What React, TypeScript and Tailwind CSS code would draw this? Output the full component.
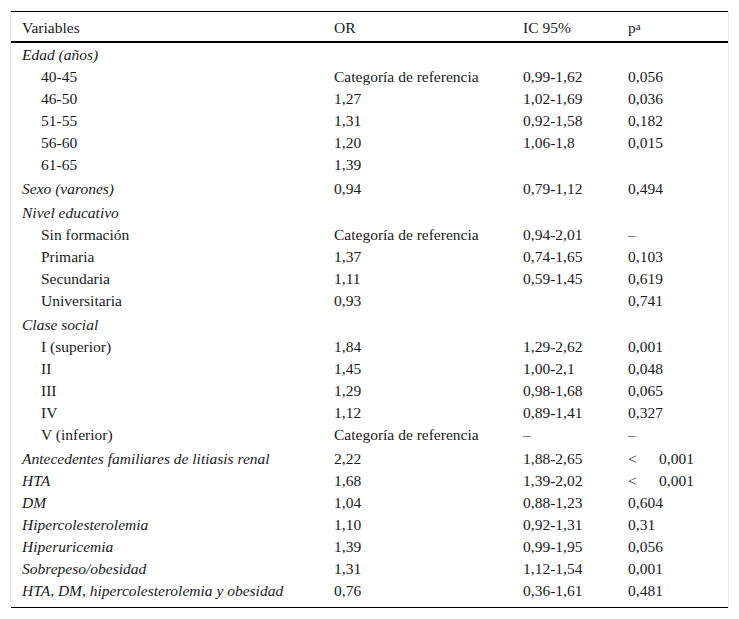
type Row = {
  label: string;
  or?: string;
  ic?: string;
  p?: string;
  lt?: boolean;
  sub?: boolean;
  gap?: boolean;
};

const rows: Row[] = [
  { label: "Edad (años)" },
  { label: "40-45", or: "Categoría de referencia", ic: "0,99-1,62", p: "0,056", sub: true },
  { label: "46-50", or: "1,27", ic: "1,02-1,69", p: "0,036", sub: true },
  { label: "51-55", or: "1,31", ic: "0,92-1,58", p: "0,182", sub: true },
  { label: "56-60", or: "1,20", ic: "1,06-1,8", p: "0,015", sub: true },
  { label: "61-65", or: "1,39", sub: true },
  { label: "Sexo (varones)", or: "0,94", ic: "0,79-1,12", p: "0,494", gap: true },
  { label: "Nivel educativo", gap: true },
  { label: "Sin formación", or: "Categoría de referencia", ic: "0,94-2,01", p: "–", sub: true },
  { label: "Primaria", or: "1,37", ic: "0,74-1,65", p: "0,103", sub: true },
  { label: "Secundaria", or: "1,11", ic: "0,59-1,45", p: "0,619", sub: true },
  { label: "Universitaria", or: "0,93", p: "0,741", sub: true },
  { label: "Clase social", gap: true },
  { label: "I (superior)", or: "1,84", ic: "1,29-2,62", p: "0,001", sub: true },
  { label: "II", or: "1,45", ic: "1,00-2,1", p: "0,048", sub: true },
  { label: "III", or: "1,29", ic: "0,98-1,68", p: "0,065", sub: true },
  { label: "IV", or: "1,12", ic: "0,89-1,41", p: "0,327", sub: true },
  { label: "V (inferior)", or: "Categoría de referencia", ic: "–", p: "–", sub: true },
  { label: "Antecedentes familiares de litiasis renal", or: "2,22", ic: "1,88-2,65", p: "0,001", lt: true, gap: true },
  { label: "HTA", or: "1,68", ic: "1,39-2,02", p: "0,001", lt: true },
  { label: "DM", or: "1,04", ic: "0,88-1,23", p: "0,604" },
  { label: "Hipercolesterolemia", or: "1,10", ic: "0,92-1,31", p: "0,31" },
  { label: "Hiperuricemia", or: "1,39", ic: "0,99-1,95", p: "0,056" },
  { label: "Sobrepeso/obesidad", or: "1,31", ic: "1,12-1,54", p: "0,001" },
  { label: "HTA, DM, hipercolesterolemia y obesidad", or: "0,76", ic: "0,36-1,61", p: "0,481" },
];

const cols = "grid grid-cols-[312px_189px_105px_1fr]";

export default function App() {
  return (
    <div className="bg-white min-h-[619px] pt-[11px] [font-family:'Liberation_Serif','Times_New_Roman',serif] text-[15.5px] text-[#1a1a1a]">
      <div className="ml-[10px] w-[719px] border-x border-[#e6e6e6]">
        <div className="border-t border-black">
          <div className={`${cols} h-[31px] pt-[2px] items-center border-b-2 border-black pl-[11px]`}>
            <div>Variables</div>
            <div>OR</div>
            <div>IC 95%</div>
            <div>
              p<sup className="text-[11px] relative -top-[3px]">a</sup>
            </div>
          </div>
          <div className="pt-[1px] pb-[5px] border-b border-black">
            {rows.map((r, i) => (
              <div
                key={i}
                className={`${cols} h-[22px] items-center leading-[22px] pl-[11px] ${r.gap ? "mt-[2px]" : ""}`}
              >
                <div className={r.sub ? "pl-[19px]" : "italic"}>{r.label}</div>
                <div>{r.or}</div>
                <div>{r.ic}</div>
                <div className="flex">
                  {r.lt && <span className="w-[31px]">&lt;</span>}
                  <span>{r.p}</span>
                </div>
              </div>
            ))}
          </div>
        </div>
      </div>
    </div>
  );
}
